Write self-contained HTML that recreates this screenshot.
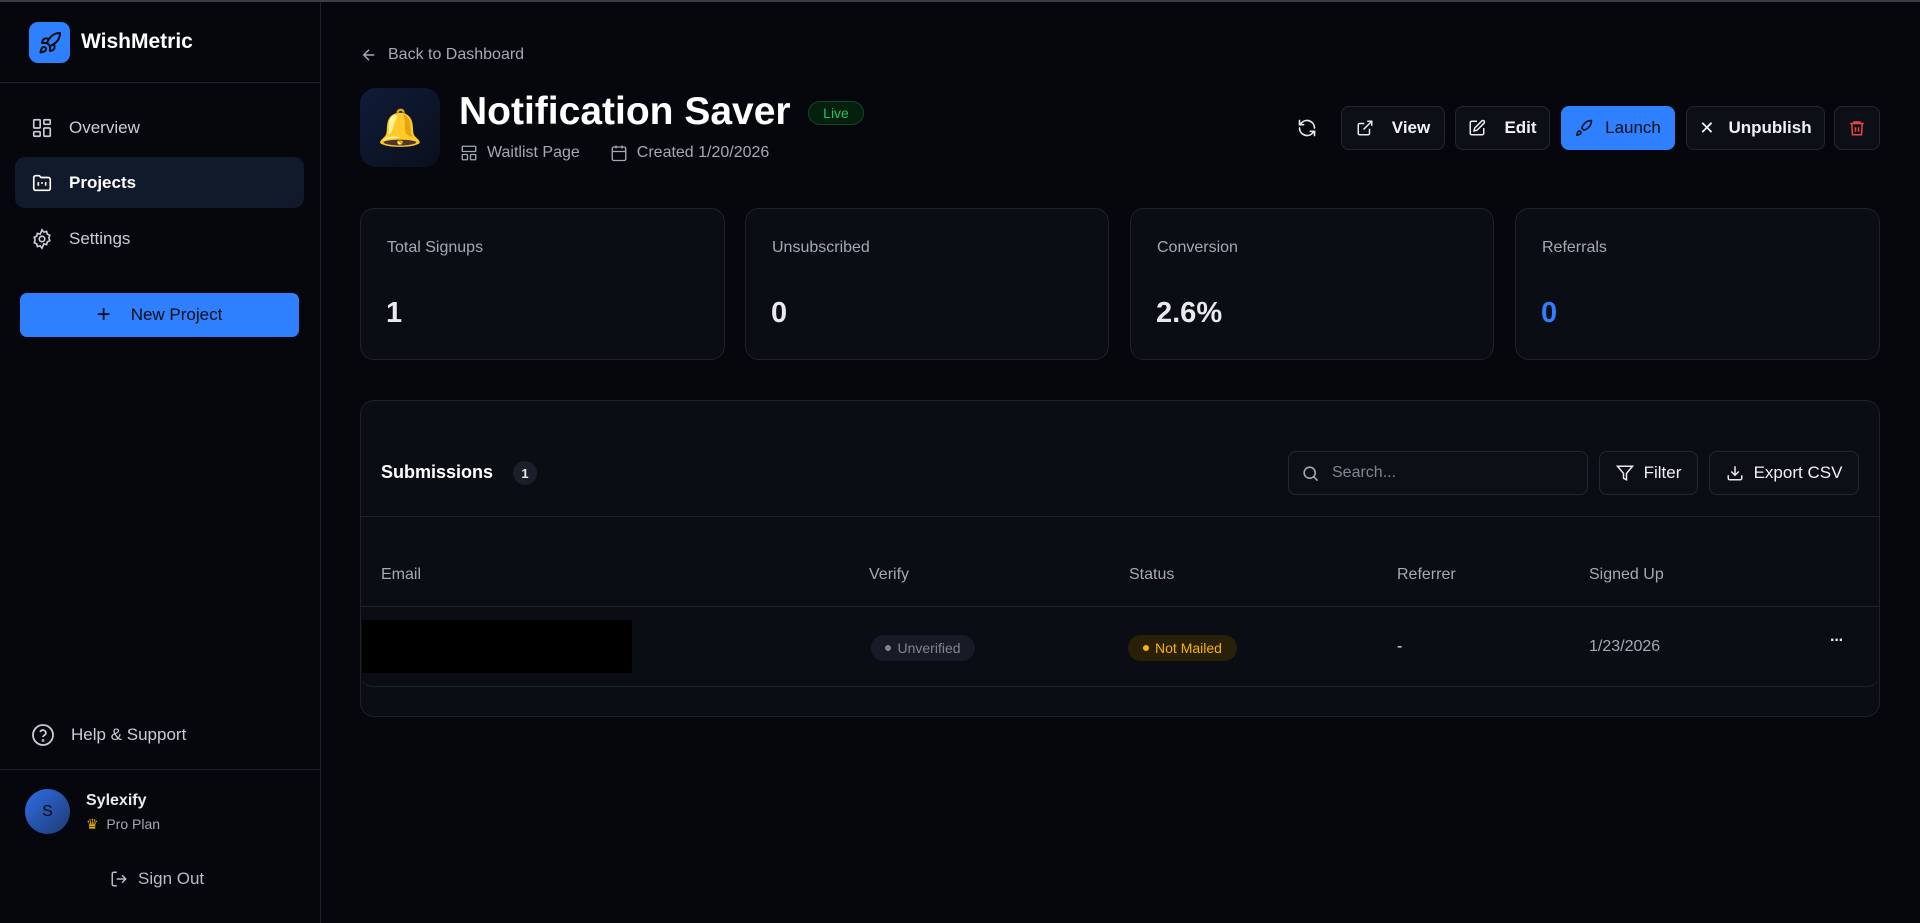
<!DOCTYPE html>
<html><head><meta charset="utf-8"><style>
*{box-sizing:border-box;margin:0;padding:0}
body{width:1920px;height:921px;background:#05070d;font-family:"Liberation Sans",sans-serif;color:#e8eaee;position:relative;overflow:hidden;border-top:2px solid #3a3d45}
.abs{position:absolute}
.sb{left:0;top:0;width:321px;height:921px;border-right:1px solid #1c212c}
.nav{left:15px;width:289px;height:51px;border-radius:10px;display:flex;align-items:center;padding-left:16px;font-size:17px;color:#c9cdd4}
.nav svg{margin-right:16px}
.btn{top:104px;height:44px;border:1px solid #222733;background:#0c0f16;border-radius:8px;display:flex;align-items:center;justify-content:center;font-size:17px;font-weight:bold;color:#f0f2f5;gap:18px}
.card{background:#0a0d14;border:1px solid #1d222d;border-radius:14px}
.lbl{font-size:16px;color:#a4a9b3}
.val{font-size:29px;font-weight:bold}
.th{top:564px;font-size:16px;color:#a4a9b3}
</style></head><body>
<div class="abs sb">
 <div class="abs" style="left:29px;top:20px;width:41px;height:41px;border-radius:9px;background:#2f80ff;display:flex;align-items:center;justify-content:center">
  <svg width="24" height="24" viewBox="0 0 24 24" fill="none" stroke="#0a0d14" stroke-width="2" stroke-linecap="round" stroke-linejoin="round"><path d="M4.5 16.5c-1.5 1.3-2 5-2 5s3.7-.5 5-2c.7-.8.7-2.1-.1-2.9a2.2 2.2 0 0 0-2.9-.1z"/><path d="M12 15l-3-3a22 22 0 0 1 2-4A12.9 12.9 0 0 1 22 2c0 2.7-.8 7.5-6 11a22.4 22.4 0 0 1-4 2z"/><path d="M9 12H4s.6-3 2-4c1.6-1.1 5 0 5 0"/><path d="M12 15v5s3-.6 4-2c1.1-1.6 0-5 0-5"/></svg>
 </div>
 <div class="abs" style="left:81px;top:28px;font-size:21px;font-weight:bold;color:#fff">WishMetric</div>
 <div class="abs" style="left:0;top:80px;width:320px;height:1px;background:#1c212c"></div>
 <div class="abs nav" style="top:100px"><svg width="22" height="22" viewBox="0 0 24 24" fill="none" stroke="#c9cdd4" stroke-width="1.8"><rect x="3" y="3" width="7" height="9" rx="1"/><rect x="14" y="3" width="7" height="5" rx="1"/><rect x="14" y="12" width="7" height="9" rx="1"/><rect x="3" y="16" width="7" height="5" rx="1"/></svg>Overview</div>
 <div class="abs nav" style="top:155px;background:#111a2b;color:#fff;font-weight:bold"><svg width="22" height="22" viewBox="0 0 24 24" fill="none" stroke="#fff" stroke-width="1.8"><path d="M3 6a2 2 0 0 1 2-2h4l2 2h8a2 2 0 0 1 2 2v10a2 2 0 0 1-2 2H5a2 2 0 0 1-2-2z"/><path d="M8 11v4M12 11v2M16 11v4"/></svg>Projects</div>
 <div class="abs nav" style="top:211px"><svg width="22" height="22" viewBox="0 0 24 24" fill="none" stroke="#c9cdd4" stroke-width="1.8"><circle cx="12" cy="12" r="3"/><path d="M12 2l2 2.5 3-.8.8 3 2.7 1.3-1 2.9 1 2.9-2.7 1.3-.8 3-3-.8L12 22l-2-2.5-3 .8-.8-3-2.7-1.3 1-2.9-1-2.9 2.7-1.3.8-3 3 .8z"/></svg>Settings</div>
 <div class="abs" style="left:20px;top:291px;width:279px;height:44px;background:#2f80ff;border-radius:7px;display:flex;align-items:center;justify-content:center;font-size:17px;color:#0a0d14;gap:20px"><span style="font-size:24px;line-height:1">+</span>New Project</div>
 <div class="abs nav" style="top:707px"><svg width="24" height="24" viewBox="0 0 24 24" fill="none" stroke="#c9cdd4" stroke-width="1.8"><circle cx="12" cy="12" r="10"/><path d="M9.1 9a3 3 0 0 1 5.8 1c0 2-3 2.5-3 4"/><circle cx="12" cy="17.5" r=".5"/></svg>Help &amp; Support</div>
 <div class="abs" style="left:0;top:767px;width:320px;height:1px;background:#1c212c"></div>
 <div class="abs" style="left:25px;top:787px;width:45px;height:45px;border-radius:50%;background:linear-gradient(135deg,#2f6ee8,#1e3a70);display:flex;align-items:center;justify-content:center;font-size:16px;color:#0a0d14">S</div>
 <div class="abs" style="left:86px;top:790px;font-size:16px;font-weight:bold;color:#e8eaee">Sylexify</div>
 <div class="abs" style="left:86px;top:814px;font-size:14px;color:#a4a9b3"><span style="color:#f5b400">♛</span>&nbsp; Pro Plan</div>
 <div class="abs" style="left:110px;top:867px;font-size:17px;color:#b8bcc4;display:flex;align-items:center;gap:10px"><svg width="18" height="18" viewBox="0 0 24 24" fill="none" stroke="#b8bcc4" stroke-width="2"><path d="M9 21H5a2 2 0 0 1-2-2V5a2 2 0 0 1 2-2h4M16 17l5-5-5-5M21 12H9"/></svg>Sign Out</div>
</div>

<div class="abs" style="left:360px;top:44px;font-size:16px;color:#a4a9b3;display:flex;align-items:center;gap:10px"><svg width="18" height="18" viewBox="0 0 24 24" fill="none" stroke="#a4a9b3" stroke-width="2"><path d="M19 12H5M12 19l-7-7 7-7"/></svg>Back to Dashboard</div>
<div class="abs" style="left:360px;top:86px;width:80px;height:79px;border-radius:16px;background:linear-gradient(135deg,#0f1c38,#0a0f1c);display:flex;align-items:center;justify-content:center;font-size:36px">🔔</div>
<div class="abs" style="left:459px;top:88px;font-size:39px;font-weight:bold;color:#fff">Notification Saver</div>
<div class="abs" style="left:808px;top:99px;width:56px;height:24px;border-radius:12px;background:#06200f;border:1px solid #0f4a22;color:#22c55e;font-size:14px;display:flex;align-items:center;justify-content:center">Live</div>
<div class="abs" style="left:460px;top:142px;font-size:16px;color:#a4a9b3;display:flex;align-items:center;gap:9px"><svg width="18" height="18" viewBox="0 0 24 24" fill="none" stroke="#a4a9b3" stroke-width="1.8"><rect x="3" y="3" width="18" height="7" rx="1"/><rect x="3" y="14" width="7" height="7" rx="1"/><rect x="14" y="14" width="7" height="7" rx="1"/></svg>Waitlist Page<span style="width:12px"></span><svg width="18" height="18" viewBox="0 0 24 24" fill="none" stroke="#a4a9b3" stroke-width="1.8"><rect x="3" y="4" width="18" height="18" rx="2"/><path d="M16 2v4M8 2v4M3 10h18"/></svg>Created 1/20/2026</div>

<svg class="abs" style="left:1297px;top:116px" width="20" height="20" viewBox="0 0 24 24" fill="none" stroke="#e8eaee" stroke-width="2" stroke-linecap="round"><path d="M21 12a9 9 0 0 0-15.5-6.2L3 8M3 3v5h5M3 12a9 9 0 0 0 15.5 6.2L21 16M21 21v-5h-5"/></svg>
<div class="abs btn" style="left:1341px;width:104px"><svg width="18" height="18" viewBox="0 0 24 24" fill="none" stroke="#e8eaee" stroke-width="2"><path d="M15 3h6v6M10 14L21 3M18 13v6a2 2 0 0 1-2 2H5a2 2 0 0 1-2-2V8a2 2 0 0 1 2-2h6"/></svg>View</div>
<div class="abs btn" style="left:1455px;width:95px"><svg width="18" height="18" viewBox="0 0 24 24" fill="none" stroke="#e8eaee" stroke-width="2"><path d="M12 3H5a2 2 0 0 0-2 2v14a2 2 0 0 0 2 2h14a2 2 0 0 0 2-2v-7"/><path d="M18.4 2.6a2.1 2.1 0 0 1 3 3L12 15l-4 1 1-4z"/></svg>Edit</div>
<div class="abs btn" style="left:1561px;width:114px;background:#2f80ff;border-color:#2f80ff;color:#0a0d14;font-weight:normal;gap:12px"><svg width="18" height="18" viewBox="0 0 24 24" fill="none" stroke="#0a0d14" stroke-width="2"><path d="M4.5 16.5c-1.5 1.3-2 5-2 5s3.7-.5 5-2c.7-.8.7-2.1-.1-2.9a2.2 2.2 0 0 0-2.9-.1z"/><path d="M12 15l-3-3a22 22 0 0 1 2-4A12.9 12.9 0 0 1 22 2c0 2.7-.8 7.5-6 11a22.4 22.4 0 0 1-4 2z"/></svg>Launch</div>
<div class="abs btn" style="left:1686px;width:139px;gap:14px"><span style="font-weight:normal;font-size:18px">✕</span>Unpublish</div>
<div class="abs btn" style="left:1834px;width:46px"><svg width="18" height="18" viewBox="0 0 24 24" fill="none" stroke="#ef4444" stroke-width="2"><path d="M3 6h18M8 6V4h8v2M5 6l1 15h12l1-15M10 11v6M14 11v6"/></svg></div>

<div class="abs card" style="left:360px;top:206px;width:365px;height:152px"><div class="abs lbl" style="left:26px;top:30px">Total Signups</div><div class="abs val" style="left:25px;top:88px">1</div></div>
<div class="abs card" style="left:745px;top:206px;width:364px;height:152px"><div class="abs lbl" style="left:26px;top:30px">Unsubscribed</div><div class="abs val" style="left:25px;top:88px">0</div></div>
<div class="abs card" style="left:1130px;top:206px;width:364px;height:152px"><div class="abs lbl" style="left:26px;top:30px">Conversion</div><div class="abs val" style="left:25px;top:88px">2.6%</div></div>
<div class="abs card" style="left:1515px;top:206px;width:365px;height:152px"><div class="abs lbl" style="left:26px;top:30px">Referrals</div><div class="abs val" style="left:25px;top:88px;color:#2f80ff">0</div></div>

<div class="abs card" style="left:360px;top:398px;width:1520px;height:317px"></div>
<div class="abs" style="left:361px;top:514px;width:1518px;height:171px;border-top:1px solid #1d222d;border-bottom:1px solid #1d222d;border-radius:0 0 12px 12px"></div>
<div class="abs" style="left:381px;top:460px;font-size:18px;font-weight:bold;color:#fff">Submissions</div>
<div class="abs" style="left:513px;top:459px;width:24px;height:24px;border-radius:12px;background:#1a1f2a;font-size:13px;font-weight:bold;display:flex;align-items:center;justify-content:center">1</div>
<div class="abs" style="left:1288px;top:449px;width:300px;height:44px;border:1px solid #222733;background:#0c0f16;border-radius:8px;display:flex;align-items:center;padding-left:12px;gap:12px;font-size:16px;color:#80858f"><svg width="19" height="19" viewBox="0 0 24 24" fill="none" stroke="#a4a9b3" stroke-width="2"><circle cx="11" cy="11" r="7"/><path d="M21 21l-5-5"/></svg>Search...</div>
<div class="abs btn" style="left:1599px;top:449px;width:99px;gap:10px;font-weight:normal"><svg width="18" height="18" viewBox="0 0 24 24" fill="none" stroke="#e8eaee" stroke-width="2"><path d="M22 3H2l8 9.5V19l4 2v-8.5z"/></svg>Filter</div>
<div class="abs btn" style="left:1709px;top:449px;width:150px;gap:10px;font-weight:normal"><svg width="18" height="18" viewBox="0 0 24 24" fill="none" stroke="#e8eaee" stroke-width="2"><path d="M21 15v4a2 2 0 0 1-2 2H5a2 2 0 0 1-2-2v-4M7 10l5 5 5-5M12 15V3"/></svg>Export CSV</div>

<div class="abs th" style="left:381px">Email</div>
<div class="abs th" style="left:869px">Verify</div>
<div class="abs th" style="left:1129px">Status</div>
<div class="abs th" style="left:1397px">Referrer</div>
<div class="abs th" style="left:1589px">Signed Up</div>
<div class="abs" style="left:361px;top:604px;width:1518px;height:1px;background:#1d222d"></div>
<div class="abs" style="left:362px;top:618px;width:270px;height:53px;background:#000"></div>
<div class="abs" style="left:871px;top:633px;width:104px;height:26px;border-radius:13px;background:#161b26;font-size:14px;color:#80858f;display:flex;align-items:center;justify-content:center;gap:6px"><span style="width:6px;height:6px;border-radius:3px;background:#80858f"></span>Unverified</div>
<div class="abs" style="left:1128px;top:633px;width:109px;height:26px;border-radius:13px;background:#2a2008;font-size:14px;color:#f5b400;display:flex;align-items:center;justify-content:center;gap:6px"><span style="width:6px;height:6px;border-radius:3px;background:#f5b400"></span>Not Mailed</div>
<div class="abs" style="left:1397px;top:636px;font-size:16px">-</div>
<div class="abs" style="left:1589px;top:636px;font-size:16px;color:#a4a9b3">1/23/2026</div>
<div class="abs" style="left:1830px;top:630px;font-size:16px;font-weight:bold;letter-spacing:-1px">···</div>
</body></html>
